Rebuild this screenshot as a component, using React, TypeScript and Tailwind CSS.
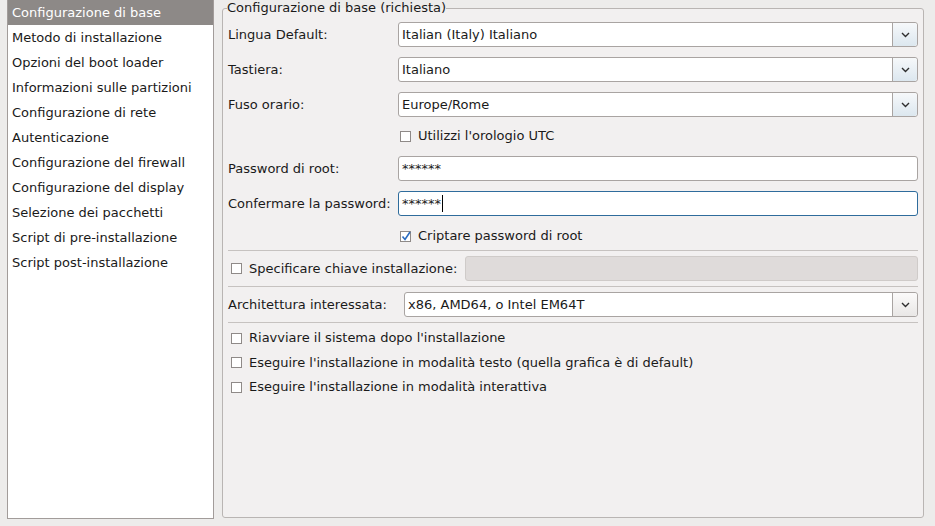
import React from 'react';

const sections = [
  'Configurazione di base',
  'Metodo di installazione',
  'Opzioni del boot loader',
  'Informazioni sulle partizioni',
  'Configurazione di rete',
  'Autenticazione',
  'Configurazione del firewall',
  'Configurazione del display',
  'Selezione dei pacchetti',
  'Script di pre-installazione',
  'Script post-installazione',
];

const Chevron = () => (
  <svg width="9" height="6" viewBox="0 0 9 6" fill="none">
    <path d="M1 1l3.5 3.5L8 1" stroke="#2e2e2e" strokeWidth="1.4" />
  </svg>
);

const Combo = ({ value, blue = true }: { value: string; blue?: boolean }) => (
  <div className="flex h-[25px] flex-1 rounded-[3px] border border-[#a9a4a2] bg-white">
    <div className="flex flex-1 items-center px-[3px]">{value}</div>
    <div
      className={`flex w-[25px] items-center justify-center rounded-r-[3px] border-l border-[#a9a4a2] ${
        blue ? 'bg-gradient-to-b from-[#f6f8fa] to-[#dce7ef]' : 'bg-gradient-to-b from-[#fbfafa] to-[#e9e7e6]'
      }`}
    >
      <Chevron />
    </div>
  </div>
);

const Check = ({ checked = false }: { checked?: boolean }) => (
  <span className="relative inline-block h-[11px] w-[11px] shrink-0 border border-[#8f8a88] bg-white">
    {checked && (
      <svg className="absolute -left-[1px] -top-[2px]" width="12" height="12" viewBox="0 0 12 12" fill="none">
        <path d="M2.5 6.5l2.5 3L10 2" stroke="#2c6cc0" strokeWidth="1.6" />
      </svg>
    )}
  </span>
);

const CheckRow = ({ label, checked = false, className = '' }: { label: string; checked?: boolean; className?: string }) => (
  <div className={`flex items-center gap-[7px] ${className}`}>
    <Check checked={checked} />
    <span>{label}</span>
  </div>
);

const Sep = ({ className = '' }: { className?: string }) => (
  <div className={`h-px bg-[#c6c2c0] ${className}`} />
);

export default function App() {
  return (
    <div
      className="flex h-[526px] w-[935px] bg-[#edeceb] pl-[7px] text-[13px] leading-[16px] text-[#1a1a1a]"
      style={{ fontFamily: '"DejaVu Sans", Verdana, sans-serif' }}
    >
      <div className="h-[519px] w-[207px] shrink-0 border border-t-0 border-[#a29c9a] bg-white">
        {sections.map((s, i) => (
          <div
            key={s}
            className={`flex h-[25px] items-center pl-[4px] ${i === 0 ? 'bg-[#8d8987] text-white' : 'text-[#1a1a1a]'}`}
          >
            {s}
          </div>
        ))}
      </div>

      <fieldset className="ml-[8px] h-[518px] w-[702px] shrink-0 rounded-[3px] border border-[#b9b5b3] bg-[#f2f0f0] px-[5px] pt-[6px]">
        <legend className="-ml-[1px] px-0">Configurazione di base (richiesta)</legend>

        <div className="flex items-center">
          <span className="w-[170px]">Lingua Default:</span>
          <Combo value="Italian (Italy) Italiano" />
        </div>
        <div className="mt-[10px] flex items-center">
          <span className="w-[170px]">Tastiera:</span>
          <Combo value="Italiano" />
        </div>
        <div className="mt-[10px] flex items-center">
          <span className="w-[170px]">Fuso orario:</span>
          <Combo value="Europe/Rome" />
        </div>
        <CheckRow label="Utilizzi l'orologio UTC" className="mt-[9px] h-[20px] pl-[172px]" />
        <div className="mt-[10px] flex items-center">
          <span className="w-[170px]">Password di root:</span>
          <div className="flex h-[25px] flex-1 items-center rounded-[3px] border border-[#a9a4a2] bg-white px-[3px]">
            ******
          </div>
        </div>
        <div className="mt-[10px] flex items-center">
          <span className="w-[170px]">Confermare la password:</span>
          <div className="flex h-[25px] flex-1 items-center rounded-[3px] border border-[#2f6c9c] bg-white px-[3px]">
            <span>******</span>
            <span className="ml-[1px] h-[17px] w-px bg-black" />
          </div>
        </div>
        <CheckRow label="Criptare password di root" checked className="mt-[10px] h-[20px] pl-[172px]" />

        <Sep className="mt-[4px]" />
        <div className="mt-[5px] flex h-[25px] items-center">
          <CheckRow label="Specificare chiave installazione:" className="pl-[3px]" />
          <div className="ml-[8px] h-[25px] flex-1 rounded-[3px] border border-[#cfcbc9] bg-[#dfdbda]" />
        </div>
        <Sep className="mt-[5px]" />
        <div className="mt-[5px] flex items-center">
          <span className="w-[176px]">Architettura interessata:</span>
          <Combo value="x86, AMD64, o Intel EM64T" blue={false} />
        </div>
        <Sep className="mt-[5px]" />

        <div className="mt-[3px]">
          <CheckRow label="Riavviare il sistema dopo l'installazione" className="h-[24px] pl-[3px]" />
          <CheckRow
            label="Eseguire l'installazione in modalità testo (quella grafica è di default)"
            className="h-[25px] pl-[3px]"
          />
          <CheckRow label="Eseguire l'installazione in modalità interattiva" className="h-[24px] pl-[3px]" />
        </div>
      </fieldset>
    </div>
  );
}
